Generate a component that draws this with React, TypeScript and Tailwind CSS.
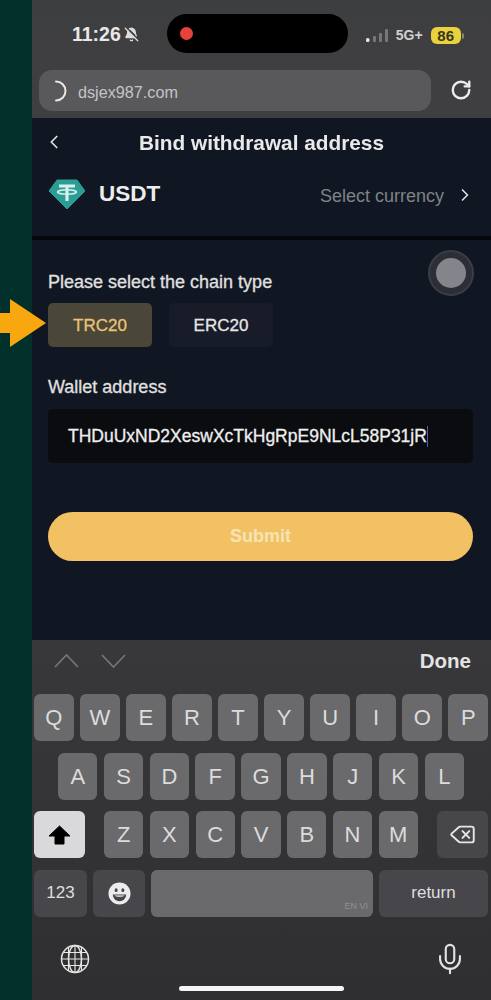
import React from "react";
import { BellOff, ChevronLeft, ChevronRight, Delete, Mic, RotateCw } from "lucide-react";

const font = "font-['Liberation_Sans',Arial,sans-serif]";

const TetherLogo = () => (
  <svg width="38" height="31" viewBox="0 0 38 31">
    <path d="M9 1h20l8 11-18 18L1 12z" fill="#2a9d95" stroke="#2a9d95" strokeLinejoin="round" />
    <path d="M11 7h16M19 7v15" stroke="#d8efec" strokeWidth="3.2" fill="none" />
    <ellipse cx="19" cy="13" rx="9.5" ry="2.2" stroke="#d8efec" strokeWidth="1.6" fill="none" />
  </svg>
);

const SignalBars = () => (
  <svg width="24" height="16" viewBox="0 0 24 16">
    <rect x="0" y="10" width="3.5" height="4" rx="1.5" fill="#e5e5e5" />
    <rect x="7" y="8" width="3" height="6" rx="1" fill="#77777a" />
    <rect x="13" y="5" width="3" height="9" rx="1" fill="#77777a" />
    <rect x="19" y="1" width="3" height="13" rx="1" fill="#77777a" />
  </svg>
);

const StatusBar = () => (
  <div className="flex h-[70px] items-start bg-gradient-to-b from-[#3d3e40] to-[#3f3f41] pt-[26px]">
    <div className="ml-[40px] flex items-center gap-[3px]">
      <span className="text-[19.5px] leading-[16px] font-bold text-[#e8e8e8]">11:26</span>
      <BellOff size={15} fill="#dddddd" className="text-[#dddddd]" />
    </div>
    <div className="ml-[28px] -mt-[12px] flex h-[39px] w-[181px] items-center rounded-full bg-black pl-[13px]">
      <div className="h-[13px] w-[13px] rounded-full bg-[#e9423b]" />
    </div>
    <div className="ml-[18px] -mt-[1px] flex items-center">
      <SignalBars />
      <span className="ml-[6px] text-[14px] font-bold text-[#d0d0d0]">5G+</span>
      <span className="ml-[8px] flex h-[17px] w-[30px] items-center justify-center rounded-[6px] bg-[#e9d23c] text-[15px] leading-none font-bold text-[#3a3520]">
        86
      </span>
      <span className="ml-[1px] h-[6px] w-[2px] rounded-r bg-[#8a8a70]" />
    </div>
  </div>
);

const UrlBar = () => (
  <div className="flex h-[48px] items-start bg-[#3f3f41] pl-[7px]">
    <div className="flex h-[41px] w-[392px] items-center rounded-[13px] bg-[#59595c] pl-[15px] text-[#c4c4c6]">
      <svg width="16" height="24" viewBox="0 0 16 24">
        <path d="M2 2.5a9.5 9.5 0 0 1 0 19" fill="none" stroke="#e8e8e8" strokeWidth="2" strokeLinecap="round" />
      </svg>
      <span className="ml-[8px] mt-[3px] text-[16.2px]">dsjex987.com</span>
    </div>
    <RotateCw size={22} strokeWidth={2.6} className="ml-[19px] mt-[9px] text-[#ececec]" />
  </div>
);

const Header = () => (
  <div className="bg-[#111722]">
    <div className="relative flex h-[50px] items-center justify-center">
      <ChevronLeft size={22} strokeWidth={1.8} className="absolute left-[11px] top-[13px] text-[#e6e6e6]" />
      <span className="-mt-[1px] text-[20.8px] font-bold text-[#e9e9e9]">Bind withdrawal address</span>
    </div>
    <div className="flex h-[68px] items-start pl-[16px] pr-[16px] pt-[11px]">
      <TetherLogo />
      <span className="ml-[13px] text-[22.5px] leading-[30px] font-bold text-[#ededed]">USDT</span>
      <span className="ml-auto mt-[5px] text-[18px] leading-[24px] text-[#7f8287]">Select currency</span>
      <ChevronRight size={20} strokeWidth={2} className="ml-[11px] mt-[6px] text-[#dedede]" />
    </div>
  </div>
);

const ChainForm = () => (
  <div className="relative h-[404px] border-t-[4px] border-[#05070a] bg-[#111722] pl-[16px] pr-[18px] pt-[32px]">
    <div className="text-[18px] leading-[20px] text-[#e0e0e0] [-webkit-text-stroke:0.3px]">Please select the chain type</div>
    <div className="mt-[11px] flex gap-[17px]">
      <div className="flex h-[44px] w-[104px] items-center justify-center rounded-[5px] bg-[#4a4638] pt-[2px] text-[17px] text-[#e8c477] [-webkit-text-stroke:0.3px]">
        TRC20
      </div>
      <div className="flex h-[44px] w-[104px] items-center justify-center rounded-[5px] bg-[#171c28] pt-[2px] text-[17px] text-[#e6e6e6] [-webkit-text-stroke:0.3px]">
        ERC20
      </div>
    </div>
    <div className="mt-[30px] text-[18px] leading-[20px] text-[#e0e0e0] [-webkit-text-stroke:0.3px]">Wallet address</div>
    <div className="mt-[12px] flex h-[54px] items-center rounded-[5px] bg-[#0b0c10] pl-[20px] text-[17.5px] text-[#efefef] [-webkit-text-stroke:0.3px]">
      THDuUxND2XeswXcTkHgRpE9NLcL58P31jR
      <span className="h-[21px] w-[1.5px] bg-[#3f5fd0]" />
    </div>
    <div className="mt-[49px] flex h-[49px] items-center justify-center rounded-full bg-[#f1c164] text-[18px] font-bold text-[#f8e3b4]">
      Submit
    </div>
    {/* assistive touch button floats over the page */}
    <div className="absolute right-[17px] top-[10px] flex h-[46px] w-[46px] items-center justify-center rounded-full border-[2px] border-[#3a3d45] bg-[#2b2e36]">
      <div className="h-[30px] w-[30px] rounded-full bg-[#84858a]" />
    </div>
  </div>
);

const Key = ({ label }: { label: string }) => (
  <div className="flex h-[47px] flex-1 items-center justify-center rounded-[6px] bg-[#6a6a6d] text-[22px] text-[#dcdcdc]">
    {label}
  </div>
);

const Globe = () => (
  <svg width="30" height="30" viewBox="0 0 30 30" fill="none" stroke="#e6e6e6" strokeWidth="1.5">
    <circle cx="15" cy="15" r="13.5" />
    <ellipse cx="15" cy="15" rx="6.5" ry="13.5" />
    <path d="M15 1.5v27M3 8.5h24M1.5 15h27M3 21.5h24M8.5 3v24M21.5 3v24" strokeWidth="1.1" />
  </svg>
);

const Emoji = () => (
  <svg width="23" height="23" viewBox="0 0 24 24">
    <circle cx="12" cy="12" r="11.5" fill="#ececec" />
    <ellipse cx="8.5" cy="8.5" rx="1.5" ry="2" fill="#45454a" />
    <ellipse cx="15.5" cy="8.5" rx="1.5" ry="2" fill="#45454a" />
    <path d="M5 13h14a7 7 0 0 1-14 0z" fill="#45454a" />
    <path d="M6.5 14h11a6 2.4 0 0 1-11 0z" fill="#ffffff" />
  </svg>
);

const Keyboard = () => (
  <div className="flex h-[360px] flex-col bg-gradient-to-b from-[#38383b] to-[#2f2f31]">
    <div className="flex h-[54px] items-start pl-[22px] pr-[20px] pt-[9px]">
      <svg width="72" height="18" viewBox="0 0 72 18" fill="none" stroke="#77777b" strokeWidth="1.6" className="mt-[3px]">
        <path d="M1 15 12.5 3 24 15" />
        <path d="M48 3 59.5 15 71 3" />
      </svg>
      <span className="ml-auto text-[20.5px] leading-[24px] font-bold text-[#e4e4e4]">Done</span>
    </div>
    <div className="flex flex-col gap-[11.5px] pl-[2px] pr-[3px]">
      <div className="flex gap-[6.4px]">
        {"QWERTYUIOP".split("").map((k) => (
          <Key key={k} label={k} />
        ))}
      </div>
      <div className="flex gap-[6.4px] px-[24px]">
        {"ASDFGHJKL".split("").map((k) => (
          <Key key={k} label={k} />
        ))}
      </div>
      <div className="flex items-center justify-between">
        <div className="flex h-[47px] w-[51px] items-center justify-center rounded-[6px] bg-[#d9d9db]">
          <svg width="23" height="20" viewBox="0 0 23 20">
            <path d="M11.5 1 22 11h-6v8H7v-8H1z" fill="#000" stroke="#000" strokeLinejoin="round" />
          </svg>
        </div>
        <div className="flex w-[314px] gap-[6.4px]">
          {"ZXCVBNM".split("").map((k) => (
            <Key key={k} label={k} />
          ))}
        </div>
        <div className="flex h-[47px] w-[51px] items-center justify-center rounded-[6px] bg-[#47474b]">
          <Delete size={27} strokeWidth={1.7} className="text-[#e6e6e6]" />
        </div>
      </div>
      <div className="flex gap-[6px]">
        <div className="flex h-[47px] w-[53px] items-center justify-center rounded-[6px] bg-[#47474b] text-[17px] text-[#dedede]">
          123
        </div>
        <div className="flex h-[47px] w-[52px] items-center justify-center rounded-[6px] bg-[#47474b]">
          <Emoji />
        </div>
        <div className="relative h-[47px] flex-1 rounded-[6px] bg-[#6a6a6d]">
          <span className="absolute bottom-[3px] right-[5px] text-[9px] text-[#909094]">EN VI</span>
        </div>
        <div className="flex h-[47px] w-[109px] items-center justify-center rounded-[6px] bg-[#47474b] text-[17px] text-[#dedede]">
          return
        </div>
      </div>
    </div>
    <div className="mt-[27px] flex items-start justify-between pl-[28px] pr-[24px]">
      <Globe />
      <Mic size={34} strokeWidth={1.5} className="-mt-[2px] text-[#e2e2e2]" />
    </div>
    <div className="mt-[10px] flex justify-center">
      <div className="h-[5px] w-[165px] rounded-full bg-[#f4f4f4]" />
    </div>
  </div>
);

export default function App() {
  return (
    <div className={`relative flex h-[1000px] w-[491px] overflow-hidden bg-[#012f2a] ${font}`}>
      <div className="w-[32px] shrink-0" />
      <div className="flex w-[459px] flex-col blur-[0.4px]">
        <StatusBar />
        <UrlBar />
        <Header />
        <ChainForm />
        <Keyboard />
      </div>
      {/* orange pointer over the left edge */}
      <svg width="46" height="48" viewBox="0 0 46 48" className="absolute left-0 top-[299px]">
        <path d="M0 14h10V0l36 24-36 24V34H0z" fill="#f9a70f" />
      </svg>
    </div>
  );
}
